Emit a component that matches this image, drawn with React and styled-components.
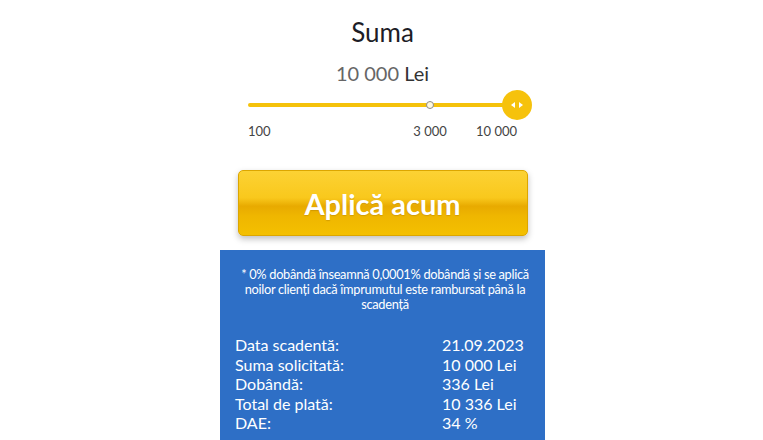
import styled, { createGlobalStyle } from 'styled-components';

const GlobalStyle = createGlobalStyle`
    html, body {
        margin: 0;
        padding: 0;
        background: #ffffff;
    }
    body {
        width: 763px;
        height: 440px;
        overflow: hidden;
        font-family: Lato, "Open Sans", sans-serif;
    }
`

const Page = styled.div`
    width: 763px;
    height: 440px;
    display: flex;
    justify-content: center;
    padding-left: 2px;
    box-sizing: border-box;
`

const Column = styled.div`
    width: 325px;
    display: flex;
    flex-direction: column;
    align-items: center;
    padding-top: 16px;
`

const Title = styled.h1`
    margin: 0;
    font-size: 26px;
    font-weight: 400;
    line-height: 32px;
    color: #1d1d26;
`

const Amount = styled.div`
    margin-top: 13px;
    font-size: 20px;
    line-height: 24px;
    color: #666666;

    span {
        color: #333333;
    }
`

const Slider = styled.div`
    position: relative;
    width: 269px;
    margin-top: 5px;
    height: 62px;
`

const Track = styled.div`
    position: absolute;
    left: 0;
    right: 0;
    top: 13px;
    height: 4px;
    background: #f5c20a;
    border-radius: 2px;
`

const Marker = styled.div`
    position: absolute;
    top: 11px;
    width: 6px;
    height: 6px;
    margin-left: -4px;
    border: 1px solid #8a8a8a;
    border-radius: 50%;
    background: #fff8de;
`

const Thumb = styled.div`
    position: absolute;
    right: -15px;
    top: 0;
    width: 30px;
    height: 30px;
    border-radius: 50%;
    background: #f6c20c;
    display: flex;
    align-items: center;
    justify-content: center;
`

const Tick = styled.div`
    position: absolute;
    top: 33px;
    font-size: 13px;
    line-height: 16px;
    color: #444;
    white-space: nowrap;
    transform: translateX(${p => p.$shift});
`

const ApplyButton = styled.button`
    margin-top: 18px;
    width: 290px;
    height: 66px;
    border: 1px solid #dca600;
    border-radius: 5px;
    background: linear-gradient(#fcd234 0%, #f9c81c 42%, #e8aa00 55%, #efb600 70%, #f4c000 100%);
    box-shadow: 0 3px 6px rgba(0, 0, 0, 0.25);
    color: #ffffff;
    font-family: Lato, "Open Sans", sans-serif;
    font-weight: 700;
    font-size: 29px;
    text-shadow: 0 1px 1px rgba(150, 100, 0, 0.3);
    cursor: pointer;
`

const Panel = styled.div`
    margin-top: 14px;
    width: 325px;
    flex: 1;
    background: #2e6fc6;
    color: #ffffff;
    box-sizing: border-box;
    padding: 17px 10px 0 15px;
`

const Note = styled.p`
    margin: 0 auto;
    width: 300px;
    text-align: center;
    font-size: 12.8px;
    letter-spacing: -0.3px;
    line-height: 15px;
`

const Table = styled.div`
    margin-top: 23px;
    display: grid;
    grid-template-columns: 207px 1fr;
    font-size: 16px;
    line-height: 19.6px;
`

const rows = [
    ['Data scadentă:', '21.09.2023'],
    ['Suma solicitată:', '10 000 Lei'],
    ['Dobândă:', '336 Lei'],
    ['Total de plată:', '10 336 Lei'],
    ['DAE:', '34 %'],
]

const ticks = [
    { label: '100', pos: 0, shift: '0' },
    { label: '3 000', pos: 67.7, shift: '-50%' },
    { label: '10 000', pos: 100, shift: '-100%' },
]

const App = () => {
  return (
    <Page>
        <GlobalStyle />
        <Column>
            <Title>Suma</Title>
            <Amount>10 000 <span>Lei</span></Amount>
            <Slider>
                <Track />
                <Marker style={{ left: '67.7%' }} />
                <Thumb>
                    <svg width="14" height="8" viewBox="0 0 14 8">
                        <path d="M1 4 L5 1 L5 7 Z" fill="#fff" />
                        <path d="M13 4 L9 1 L9 7 Z" fill="#fff" />
                    </svg>
                </Thumb>
                {ticks.map(t => (
                    <Tick key={t.label} $shift={t.shift} style={{ left: t.pos + '%' }}>{t.label}</Tick>
                ))}
            </Slider>
            <ApplyButton>Aplică acum</ApplyButton>
            <Panel>
                <Note>* 0% dobândă înseamnă 0,0001% dobândă și se aplică noilor clienți dacă împrumutul este rambursat până la scadență</Note>
                <Table>
                    {rows.map(([k, v]) => (
                        <>
                            <div key={k}>{k}</div>
                            <div key={v}>{v}</div>
                        </>
                    ))}
                </Table>
            </Panel>
        </Column>
    </Page>
  )
}

export default App
